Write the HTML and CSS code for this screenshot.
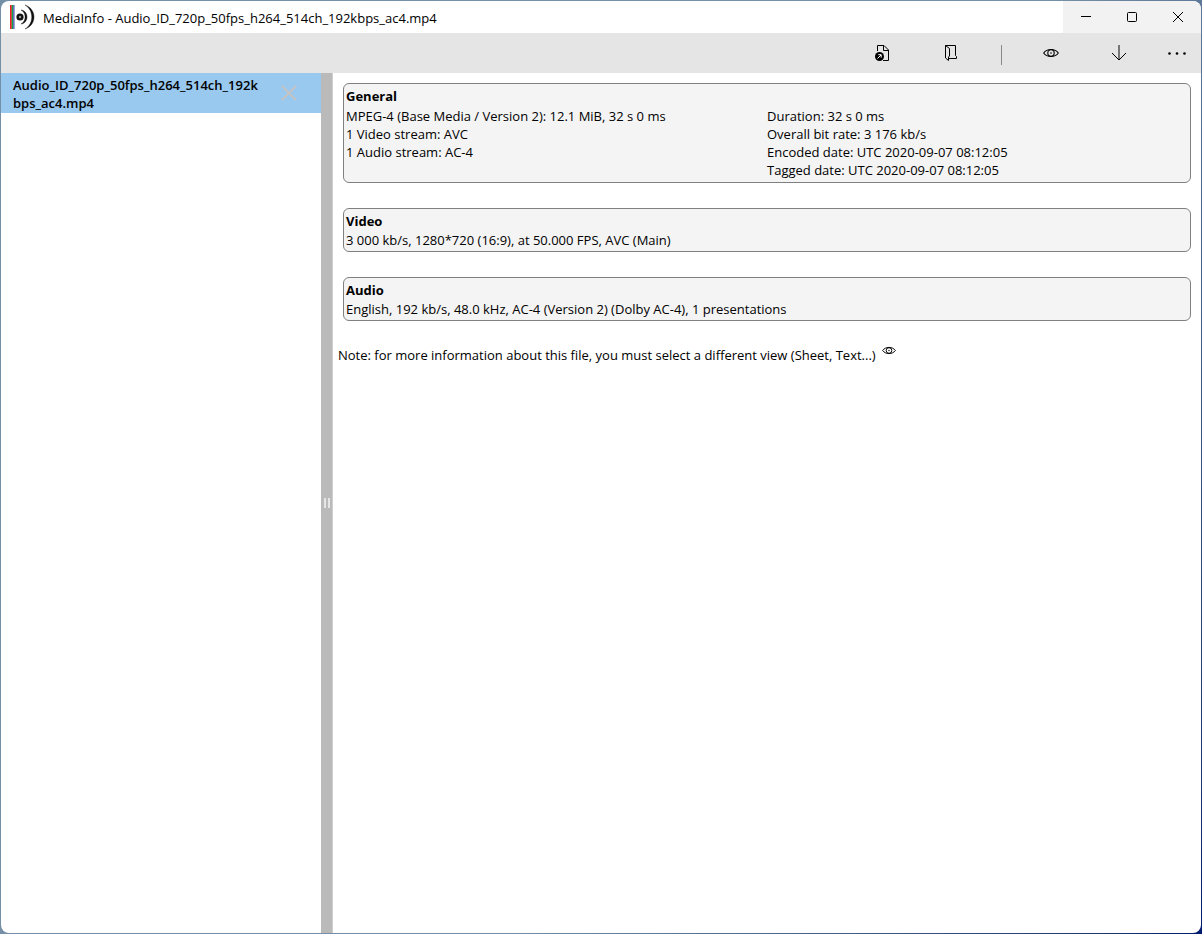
FILE: index.html
```html
<!DOCTYPE html>
<html lang="en">
<head>
    <meta charset="UTF-8">
    <meta name="viewport" content="width=device-width, initial-scale=1.0">
    <title>MediaInfo - Audio_ID_720p_50fps_h264_514ch_192kbps_ac4.mp4</title>
    <link rel="stylesheet" href="styles.css">
</head>
<body>
    <svg class="sprite">
        <symbol id="eye" viewBox="0 0 16 10">
            <path d="M.7 5C4 .3 12 .3 15.3 5C12 9.7 4 9.7.7 5Z" fill="none" stroke="currentColor" stroke-width="1.1"/>
            <circle cx="8" cy="5" r="3.2" fill="none" stroke="currentColor" stroke-width="1.1"/>
            <circle cx="8" cy="5" r=".8" fill="currentColor" stroke="none"/>
        </symbol>
    </svg>
    <div class="window">
        <header class="titlebar">
            <svg class="logo" width="26" height="26" viewBox="0 0 26 26">
                <path d="M1.9 1V25" stroke="#ee1c1c" stroke-width="1.8"/>
                <path d="M3.5 1V25" stroke="#14a04a" stroke-width="1.6"/>
                <path d="M4.9 1V25" stroke="#3b45b0" stroke-width="1.2"/>
                <circle cx="11" cy="13" r="3.6" fill="#111"/>
                <circle cx="11" cy="13" r="1.2" fill="#999"/>
                <path d="M12 6C20 7 20 19 12 20C17.5 17 17.5 9 12 6Z" fill="#111" stroke="#111" stroke-width=".4"/>
                <path d="M16 1C28 5 28 21 16 25C25 20 25 6 16 1Z" fill="#111" stroke="#111" stroke-width=".4"/>
            </svg>
            <h1>MediaInfo - Audio_ID_720p_50fps_h264_514ch_192kbps_ac4.mp4</h1>
            <div class="controls">
                <button aria-label="Minimize"><svg width="12" height="12"><path d="M1 5.5H11"/></svg></button>
                <button aria-label="Maximize"><svg width="12" height="12"><rect x="1.5" y="1.5" width="9" height="9" rx="1"/></svg></button>
                <button aria-label="Close"><svg width="12" height="12"><path d="M1 1L11 11M11 1L1 11"/></svg></button>
            </div>
        </header>
        <nav class="toolbar">
            <button aria-label="Open file">
                <svg width="16" height="18">
                    <path d="M2.5 7V1.5H9L13.5 6V16.5H8M8.5 1.5V6.5H13.5"/>
                    <circle cx="4.5" cy="12.5" r="4.5" fill="#000" stroke="none"/>
                    <path d="M2.5 14.5L6 11M3.3 10.7H6.2V13.6" stroke="#fff"/>
                </svg>
            </button>
            <button aria-label="Open folder">
                <svg width="16" height="18">
                    <path d="M2.5 1.5H12.5V11.5L13.5 12.5V14.5H6M2.5 1.5V14L5.5 16.5V13L6.5 12V4.5L2.5 1.5"/>
                </svg>
            </button>
            <span class="separator"></span>
            <button aria-label="View"><svg width="16" height="10"><use href="#eye"/></svg></button>
            <button aria-label="Export">
                <svg width="16" height="18"><path d="M8 1V16" stroke="#777" stroke-width="2"/><path d="M1 9L8 16L15 9"/></svg>
            </button>
            <button class="more" aria-label="More">
                <svg width="20" height="4"><g fill="#000" stroke="none"><circle cx="2.5" cy="2.5" r="1.3"/><circle cx="10" cy="2.5" r="1.3"/><circle cx="17.5" cy="2.5" r="1.3"/></g></svg>
            </button>
        </nav>
        <div class="content">
            <aside class="files">
                <div class="file selected">
                    <span class="name">Audio_ID_720p_50fps_h264_514ch_192k<br>bps_ac4.mp4</span>
                    <button aria-label="Close file"><svg width="16" height="16"><path d="M1 1L15 15M15 1L1 15"/></svg></button>
                </div>
            </aside>
            <div class="splitter"><span></span><span></span></div>
            <main>
                <section class="card general">
                    <h2>General</h2>
                    <div class="columns">
                        <ul>
                            <li>MPEG-4 (Base Media / Version 2): 12.1 MiB, 32 s 0 ms</li>
                            <li>1 Video stream: AVC</li>
                            <li>1 Audio stream: AC-4</li>
                        </ul>
                        <ul>
                            <li>Duration: 32 s 0 ms</li>
                            <li>Overall bit rate: 3 176 kb/s</li>
                            <li>Encoded date: UTC 2020-09-07 08:12:05</li>
                            <li>Tagged date: UTC 2020-09-07 08:12:05</li>
                        </ul>
                    </div>
                </section>
                <section class="card">
                    <h2>Video</h2>
                    <p>3 000 kb/s, 1280*720 (16:9), at 50.000 FPS, AVC (Main)</p>
                </section>
                <section class="card">
                    <h2>Audio</h2>
                    <p>English, 192 kb/s, 48.0 kHz, AC-4 (Version 2) (Dolby AC-4), 1 presentations</p>
                </section>
                <div class="note">
                    <p>Note: for more information about this file, you must select a different view (Sheet, Text...)</p>
                    <button aria-label="Select view"><svg width="14" height="9"><use href="#eye"/></svg></button>
                </div>
            </main>
        </div>
    </div>
</body>
</html>
```
FILE: styles.css
```css
* {
    box-sizing: border-box;
}
body {
    margin: 0;
    padding: 1px;
    height: 100vh;
    background: linear-gradient(120deg, #7590a6 60%, #1f3470 95%, #001a70);
    font-family: "Open Sans", "Noto Sans", sans-serif;
    font-size: 13px;
    line-height: 19px;
    color: #000;
}
h1, h2, p, ul {
    margin: 0;
    padding: 0;
    font-size: inherit;
}
ul {
    list-style: none;
}
button {
    display: flex;
    align-items: center;
    justify-content: center;
    padding: 0;
    border: none;
    background: none;
    color: #000;
}
button svg {
    flex: none;
    fill: none;
    stroke: #000;
}
.sprite {
    display: none;
}
.window {
    display: flex;
    flex-direction: column;
    height: 100%;
    background: #fff;
    border-radius: 8px;
    overflow: hidden;
}
.titlebar {
    display: flex;
    align-items: center;
    height: 32px;
    padding-left: 8px;
}
.titlebar h1 {
    flex: 1;
    padding: 2px 0 0 8px;
    font-weight: normal;
}
.controls {
    display: flex;
    height: 100%;
    background: #f2f2f2;
}
.controls button {
    width: 46px;
}
.toolbar {
    display: flex;
    justify-content: flex-end;
    align-items: center;
    height: 40px;
    background: #e5e5e5;
}
.toolbar button {
    width: 68px;
    height: 40px;
}
.toolbar .more {
    width: 48px;
}
.separator {
    width: 1px;
    height: 20px;
    margin: 3px 15px 0 16px;
    background: #8a8a8a;
}
.content {
    display: flex;
    flex: 1;
}
.files {
    width: 320px;
}
.file {
    display: flex;
    align-items: center;
    height: 40px;
    padding-left: 12px;
    line-height: 18px;
    font-weight: 600;
}
.file.selected {
    background: #99c9ef;
}
.file .name {
    width: 268px;
    padding-top: 2px;
}
.file svg {
    stroke: #c4c4c4;
    stroke-width: 2;
}
.splitter {
    display: flex;
    align-items: center;
    justify-content: center;
    gap: 2px;
    width: 12px;
    background: #bababa;
    border-right: 1px solid #cfcfcf;
}
.splitter span {
    width: 2px;
    height: 10px;
    background: #e6e6e6;
}
main {
    flex: 1;
    padding: 10px;
}
.card {
    margin-bottom: 25px;
    padding: 3px 2px 1px;
    background: #f4f4f4;
    border: 1px solid #808080;
    border-radius: 6px;
}
.card h2 {
    font-weight: bold;
}
.card.general {
    padding-bottom: 3px;
}
.columns {
    display: grid;
    grid-template-columns: 1fr 1fr;
    padding-top: 1px;
    line-height: 18px;
}
.note {
    display: flex;
    align-items: flex-start;
    gap: 6px;
    margin-left: -5px;
    line-height: 18px;
}
.note button {
    height: 9px;
}
```
